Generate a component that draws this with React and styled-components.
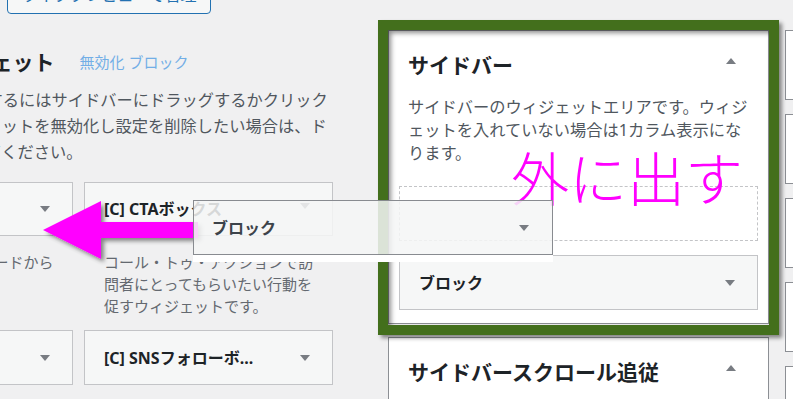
import React from 'react';
import styled, { createGlobalStyle } from 'styled-components';

const GlobalStyle = createGlobalStyle`
  html, body { margin: 0; padding: 0; background: #f0f0f1; }
  body {
    width: 793px; height: 399px; overflow: hidden;
    font-family: "Noto Sans", "Noto Sans CJK JP", sans-serif;
    color: #3c434a;
  }
  #root { width: 793px; height: 399px; }
`;

const Viewport = styled.div`
  position: relative;
  width: 793px;
  height: 399px;
  overflow: hidden;
`;

const Page = styled.div`
  margin-left: -176px;
  margin-top: -24px;
  display: flex;
  flex-direction: column;
  gap: 16px;
  width: max-content;
`;

const Header = styled.div`
  display: flex;
  align-items: center;
  gap: 8px;
  height: 38px;
`;

const PageTitle = styled.h1`
  margin: 0;
  width: 175px;
  font-size: 23px;
  font-weight: 400;
  color: #1d2327;
  white-space: nowrap;
  line-height: 38px;
`;

const OutlineButton = styled.a`
  display: inline-flex;
  align-items: center;
  justify-content: center;
  box-sizing: border-box;
  height: 38px;
  width: 204px;
  border: 1px solid #2271b1;
  border-radius: 4px;
  background: #f6f7f7;
  color: #2271b1;
  font-size: 16px;
  line-height: 1;
  text-decoration: none;
  white-space: nowrap;
`;

const Columns = styled.div`
  display: flex;
  align-items: flex-start;
`;

const LeftColumn = styled.section`
  width: 509px;
  margin-right: 55px;
  display: flex;
  flex-direction: column;
`;

const HeadingRow = styled.div`
  display: flex;
  align-items: center;
  gap: 25px;
  margin-top: 17px;
  height: 30px;
`;

const SectionTitle = styled.h2`
  margin: 0;
  font-size: 21px;
  font-weight: 700;
  line-height: 30px;
  color: #1d2327;
  white-space: nowrap;
`;

const LightLink = styled.a`
  font-size: 15px;
  line-height: 30px;
  color: #72aee6;
  text-decoration: none;
  white-space: nowrap;
`;

const Intro = styled.p`
  margin: 10px 0 0;
  font-size: 16.25px;
  line-height: 26px;
  color: #50575e;
  white-space: nowrap;
`;

const WidgetGrid = styled.div`
  margin-top: 17px;
  display: grid;
  grid-template-columns: 249px 249px;
  column-gap: 11px;
  row-gap: 13px;
`;

const Widget = styled.div`
  display: flex;
  flex-direction: column;
`;

const WidgetTop = styled.div`
  box-sizing: border-box;
  height: ${p => p.$h || 54}px;
  border: 1px solid #c3c4c7;
  background: #f6f7f7;
  padding: 0 22px 0 19px;
  display: flex;
  align-items: center;
  justify-content: space-between;
`;

const WidgetName = styled.h3`
  margin: 0;
  font-size: 16px;
  font-weight: 700;
  line-height: 22px;
  color: #1d2327;
  white-space: nowrap;
`;

const WidgetDesc = styled.p`
  margin: 15px 20px 0;
  font-size: 15px;
  line-height: 22px;
  color: #646970;
  white-space: nowrap;
`;

const Caret = styled.span`
  flex-shrink: 0;
  width: 0;
  height: 0;
  border-left: 5px solid transparent;
  border-right: 5px solid transparent;
  ${p => (p.$up ? 'border-bottom: 6px solid #787c82;' : 'border-top: 6px solid #787c82;')}
  margin-top: ${p => p.$shift || 0}px;
`;

const SidebarColumn = styled.section`
  width: 381px;
  margin-right: 16px;
  display: flex;
  flex-direction: column;
  gap: 13px;
`;

const Panel = styled.div`
  box-sizing: border-box;
  background: #fff;
  border: 1px solid #8c8f94;
  padding-bottom: ${p => p.$pb || 0}px;
  min-height: ${p => p.$minH || 0}px;
`;

const PanelHeader = styled.div`
  padding: 19px 32px 0 19px;
  display: flex;
  align-items: center;
  justify-content: space-between;
`;

const PanelDesc = styled.p`
  margin: 16px 19px 0;
  font-size: 16.25px;
  line-height: 23px;
  color: #50575e;
  white-space: nowrap;
`;

const DropZone = styled.div`
  box-sizing: border-box;
  margin: 21px 10px 0;
  height: 55px;
  border: 1px dashed #c3c4c7;
`;

const PanelWidgets = styled.div`
  margin: 14px 10px 0;
`;

const CollapsedColumn = styled.section`
  width: 381px;
  display: flex;
  flex-direction: column;
  gap: 14px;
`;

const CollapsedBox = styled.div`
  box-sizing: border-box;
  height: 70px;
  background: #fff;
  border: 1px solid #8c8f94;
  padding: 19px 19px 0;
  font-size: 21px;
  font-weight: 700;
  color: #1d2327;
  white-space: nowrap;
`;

/* Overlays (annotations & drag helper) */
const Frame = styled.div`
  position: absolute;
  left: 378px;
  top: 20px;
  width: 401px;
  height: 315px;
  box-sizing: border-box;
  border: 10px solid #436f1c;
  box-shadow: 3px 3px 4px rgba(0, 0, 0, 0.45), inset 3px 3px 5px rgba(0, 0, 0, 0.45);
  pointer-events: none;
`;

const Caption = styled.div`
  position: absolute;
  left: 511px;
  top: 147px;
  font-family: "Noto Sans CJK JP", sans-serif;
  font-size: 58px;
  font-weight: 300;
  line-height: 58px;
  color: #ff00ff;
  white-space: nowrap;
  pointer-events: none;
`;

const ArrowSvg = styled.svg`
  position: absolute;
  left: 0;
  top: 190px;
  overflow: visible;
  pointer-events: none;
`;

const DragHelper = styled.div`
  position: absolute;
  left: 193px;
  top: 200px;
  width: 360px;
  display: flex;
  flex-direction: column;
`;

const GhostBox = styled.div`
  box-sizing: border-box;
  height: 55px;
  border: 1px solid rgba(130, 133, 138, 0.95);
  background: rgba(245, 246, 246, 0.86);
  padding: 0 23px 0 18px;
  display: flex;
  align-items: center;
  justify-content: space-between;
`;

const GhostName = styled(WidgetName)`
  color: #3c434a;
`;

const GhostStrip = styled.div`
  height: 7px;
  background: #fff;
`;

export default function App() {
  return (
    <Viewport>
      <GlobalStyle />
      <Page>
        <Header>
          <PageTitle>ウィジェット</PageTitle>
          <OutlineButton href="#">ライブプレビューで管理</OutlineButton>
        </Header>
        <Columns>
          <LeftColumn>
            <HeadingRow>
              <SectionTitle>利用できるウィジェット</SectionTitle>
              <LightLink href="#">無効化 ブロック</LightLink>
            </HeadingRow>
            <Intro>
              ウィジェットを有効化するにはサイドバーにドラッグするかクリック
              <br />
              してください。ウィジェットを無効化し設定を削除したい場合は、ド
              <br />
              ラッグして左側に戻してください。
            </Intro>
            <WidgetGrid>
              <Widget>
                <WidgetTop>
                  <WidgetName>[C] 新着記事</WidgetName>
                  <Caret />
                </WidgetTop>
                <WidgetDesc>
                  テキストやショートコードから
                  <br />
                  入力できます。
                </WidgetDesc>
              </Widget>
              <Widget>
                <WidgetTop>
                  <WidgetName>[C] CTAボックス</WidgetName>
                  <Caret $shift={-6} />
                </WidgetTop>
                <WidgetDesc>
                  コール・トゥ・アクションで訪
                  <br />
                  問者にとってもらいたい行動を
                  <br />
                  促すウィジェットです。
                </WidgetDesc>
              </Widget>
              <Widget>
                <WidgetTop $h={55}>
                  <WidgetName>[C] プロフィール</WidgetName>
                  <Caret />
                </WidgetTop>
              </Widget>
              <Widget>
                <WidgetTop $h={55}>
                  <WidgetName>[C] SNSフォローボ...</WidgetName>
                  <Caret />
                </WidgetTop>
              </Widget>
            </WidgetGrid>
          </LeftColumn>

          <SidebarColumn>
            <Panel $pb={13}>
              <PanelHeader>
                <SectionTitle>サイドバー</SectionTitle>
                <Caret $up $shift={-8} />
              </PanelHeader>
              <PanelDesc>
                サイドバーのウィジェットエリアです。ウィジ
                <br />
                ェットを入れていない場合は1カラム表示にな
                <br />
                ります。
              </PanelDesc>
              <DropZone />
              <PanelWidgets>
                <WidgetTop $h={55}>
                  <WidgetName>ブロック</WidgetName>
                  <Caret />
                </WidgetTop>
              </PanelWidgets>
            </Panel>
            <Panel $minH={80}>
              <PanelHeader>
                <SectionTitle>サイドバースクロール追従</SectionTitle>
                <Caret $up $shift={-8} />
              </PanelHeader>
            </Panel>
          </SidebarColumn>

          <CollapsedColumn>
            <CollapsedBox>フッター左</CollapsedBox>
            <CollapsedBox>フッター中央</CollapsedBox>
            <CollapsedBox>フッター右</CollapsedBox>
            <CollapsedBox>モバイル用フッター</CollapsedBox>
            <CollapsedBox>投稿本文上</CollapsedBox>
          </CollapsedColumn>
        </Columns>
      </Page>

      <Frame />
      <Caption>外に出す</Caption>
      <ArrowSvg width="200" height="80" viewBox="0 0 200 80">
        <defs>
          <filter id="arrowShadow" x="-20%" y="-30%" width="140%" height="170%">
            <feDropShadow dx="3" dy="3" stdDeviation="2" floodColor="#000" floodOpacity="0.45" />
          </filter>
        </defs>
        <path
          d="M43 40 L101 11 L101 32 L198 32 L198 48 L101 48 L101 69 Z"
          fill="#ff00ff"
          filter="url(#arrowShadow)"
        />
      </ArrowSvg>
      <DragHelper>
        <GhostBox>
          <GhostName>ブロック</GhostName>
          <Caret />
        </GhostBox>
        <GhostStrip />
      </DragHelper>
    </Viewport>
  );
}
